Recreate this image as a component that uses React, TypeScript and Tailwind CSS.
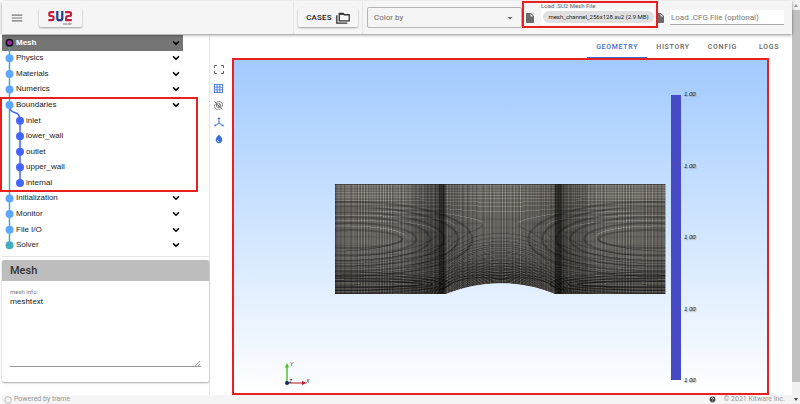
import type { ReactNode } from "react";
import { ChevronDown } from "lucide-react";
import {
  MdArrowDropDown,
  MdGridOn,
  MdHelp,
  MdInsertDriveFile,
  MdMenu,
  MdWaterDrop,
} from "react-icons/md";

type TreeNode = { label: string; depth: number; y: number };

const nodes: TreeNode[] = [
  "Mesh",
  "Physics",
  "Materials",
  "Numerics",
  "Boundaries",
  "-inlet",
  "-lower_wall",
  "-outlet",
  "-upper_wall",
  "-internal",
  "Initialization",
  "Monitor",
  "File I/O",
  "Solver",
].map((name, i) => ({
  label: name.replace("-", ""),
  depth: name.startsWith("-") ? 1 : 0,
  y: (i + 0.5) * (218 / 14),
}));

const tabs = ["Geometry", "History", "Config", "Logs"];

// Channel mesh, 256 x 128 cells. Grid lines are snapped to a raster finer
// than the screen, which gives the interference rings of a dense wireframe.
const RES = 2.23;
const MESH_W = 330;
const MESH_H = 110;
const snap = (v: number) => Math.round(v * RES) / RES;

function gridX(i: number) {
  const t = (i / 256) * 3;
  const cell = Math.floor(Math.min(t, 2.999));
  const f = t - cell;
  const k = 0.17;
  if (cell === 0) return (f + k * Math.sin(Math.PI * f) * f) * 110;
  if (cell === 1) return (1 + f - 0.03 * Math.sin(2 * Math.PI * f)) * 110;
  return (3 - (1 - f + k * Math.sin(Math.PI * f) * (1 - f))) * 110;
}

function gridY(x: number, j: number) {
  const eta = j / 128;
  const u = x / 110;
  const arc = u > 1 && u < 2 ? 44 * (u - 1) * (2 - u) : 0;
  const spread = 8 * Math.exp(-Math.pow((u - 1.5) / 0.75, 2));
  const lift = arc * Math.pow(1 - eta, 3) + spread * eta * Math.pow(1 - eta, 2) * 2;
  const stretched = eta * 0.7 + eta * eta * 0.3;
  return MESH_H * (1 - stretched) - lift;
}

function meshPaths() {
  let columns = "";
  for (let i = 0; i <= 256; i++) {
    const x = snap(gridX(i));
    columns += `M${x.toFixed(2)} 0V${gridY(x, 0).toFixed(2)}`;
  }
  let rows = "";
  for (let j = 0; j <= 128; j++) {
    let y = snap(gridY(0, j));
    rows += `M0 ${y.toFixed(2)}`;
    for (let x = 1; x <= MESH_W; x++) {
      const next = snap(gridY(x, j));
      if (next !== y) {
        rows += `H${x}M${x} ${next.toFixed(2)}`;
        y = next;
      }
    }
    rows += `H${MESH_W}`;
  }
  return { columns, rows };
}

const mesh = meshPaths();
const OUTLINE = "M0 0H330V110H220Q165 88 110 110H0Z";

// Broad dark fringes on one half of the channel; the other half mirrors them.
function Fringes() {
  return (
    <g fill="none" stroke="#000">
      {[3, 6, 9, 12].map((r, i) => (
        <ellipse key={r} cx="10" cy="100" rx={78 + i * 9} ry={r} strokeWidth="1.400" opacity={0.6 - i * 0.1} />
      ))}
      {[9, 16, 22, 27, 32, 37].map((r, i) => (
        <ellipse key={r} cx="15" cy="55" rx={52 + i * 14} ry={r} strokeWidth="2" opacity={0.22} />
      ))}
      {[3, 6, 9, 12, 15, 18, 21].map((d, i) => (
        <path key={d} d={`M${108 - d} 110Q${118 - d / 2} ${92 - d} 165 ${98 - d}`} opacity={0.5 - i * 0.06} />
      ))}
    </g>
  );
}

function MeshDrawing() {
  return (
    <svg viewBox="0 0 330 110" className="w-full" role="img" aria-label="Channel mesh">
      <clipPath id="channel">
        <path d={OUTLINE} />
      </clipPath>
      <path d={OUTLINE} fill="#fff8ec" />
      <g clipPath="url(#channel)">
        <path d={mesh.columns} stroke="#000" strokeWidth={1 / RES} fill="none" />
        <path d={mesh.rows} stroke="#000" strokeWidth={1 / RES} fill="none" />
        <Fringes />
        <g transform="translate(330 0) scale(-1 1)">
          <Fringes />
        </g>
        <path d="M0 0H330M0 0V110M330 0V110" stroke="#222" fill="none" />
        <path d="M107 0V110M223 0V110" stroke="#000" strokeWidth="7" opacity="0.35" />
        <path d="M92 0V110M238 0V110" stroke="#000" strokeWidth="30" opacity="0.12" />
      </g>
    </svg>
  );
}

function Logo() {
  return (
    <svg viewBox="0 0 25 16" className="h-4 w-[25px]" fill="none" strokeWidth="2.200">
      <path d="M6.200 2.100H3Q1.300 2.100 1.300 3.700V4.400Q1.300 6 3 6H3.800Q5.500 6 5.500 7.600V8.600Q5.500 10.200 3.800 10.200H.4" stroke="#c41f3e" />
      <path d="M9.300 1V8.200Q9.300 10.200 11.200 10.200H12.400Q14.300 10.200 14.300 8.200V1" stroke="#1f3f8f" />
      <path d="M17.200 2.100H21.200Q23 2.100 23 3.700V4.400Q23 6 21.200 6H20Q18.200 6 18.200 7.800V10.200H23.800" stroke="#c41f3e" />
      <text x="15" y="15" fontSize="4" fill="#666" stroke="none" fontFamily="Roboto">
        code
      </text>
    </svg>
  );
}

function FoldersIcon() {
  return (
    <svg viewBox="0 0 26 22" className="h-3 w-3.5" fill="none" stroke="#333" strokeWidth="2.400">
      <path d="M6 2.500H13L15.500 5H24.500V16.500H6Z" />
      <path d="M6 4H14" />
      <path d="M1.500 6V20.500H21" />
    </svg>
  );
}

function TreeGraph() {
  const first = nodes[0].y;
  const last = nodes[13].y;
  return (
    <svg viewBox="0 0 26 218" className="pointer-events-none absolute left-0 top-0 h-full w-[26px]">
      <path d={`M7.500 ${first}V${last}`} stroke="#43acc0" strokeWidth="1.500" />
      <path
        d={`M7.500 ${nodes[4].y}C7.500 82 18 73 18 ${nodes[5].y}V${nodes[9].y}`}
        stroke="#4364ff"
        strokeWidth="1.500"
        fill="none"
      />
      {nodes.map((n, i) => (
        <circle
          key={n.label}
          cx={n.depth ? 18 : 7.5}
          cy={n.y}
          r={i === 0 ? 3.2 : 4}
          fill={i === 0 ? "#9c27b0" : n.depth ? "#4364ff" : i === 13 ? "#43acc0" : "#5fa8ff"}
          stroke={i === 0 ? "#111" : "none"}
          strokeWidth="1.500"
        />
      ))}
    </svg>
  );
}

function Tree() {
  return (
    <nav className="relative h-[218px]">
      <ul className="grid h-full auto-rows-fr">
        {nodes.map((n, i) => (
          <li
            key={n.label}
            className={`mr-[26px] flex items-center pr-0.5 ${n.depth ? "pl-6" : "pl-3.5"} ${i === 0 ? "bg-[#757575] font-bold text-white" : ""}`}
          >
            <a href="#" className="flex-1 leading-none">
              {n.label}
            </a>
            {!n.depth && (
              <button aria-label={`Toggle ${n.label}`} className="text-black">
                <ChevronDown className="size-2.5" strokeWidth={4} />
              </button>
            )}
          </li>
        ))}
      </ul>
      <TreeGraph />
      <div className="pointer-events-none absolute -left-0.5 right-[11px] top-[62px] h-[95px] border-2 border-[#e8201f]" />
    </nav>
  );
}

function ToolButton({ label, children }: { label: string; children: ReactNode }) {
  return (
    <button aria-label={label} className="flex size-4 items-center justify-center">
      {children}
    </button>
  );
}

function ViewTools() {
  return (
    <div className="flex w-[22px] shrink-0 flex-col items-center gap-px pr-[5px] pt-[3px] text-[#3a6fd8]">
      <ToolButton label="Reset camera">
        <svg viewBox="0 0 20 18" className="h-[9px] w-2.5" fill="none" stroke="#666" strokeWidth="2">
          <path d="M1 6V1H6M14 1H19V6M19 12V17H14M6 17H1V12" />
        </svg>
      </ToolButton>
      <div className="h-px" />
      <ToolButton label="Toggle grid">
        <MdGridOn className="size-[11px]" />
      </ToolButton>
      <ToolButton label="Toggle rotation">
        <svg viewBox="0 0 20 20" className="size-[9px]" fill="none" stroke="#666" strokeWidth="1.800">
          <path d="M5 3.500A8 8 0 0 1 17 14.500M15 17A8 8 0 0 1 3 6" />
          <path d="M10 5L14.500 7.500V12.500L10 15L5.500 12.500V7.500ZM5.500 7.500L10 10L14.500 7.500M10 10V15M1 1L19 19" />
        </svg>
      </ToolButton>
      <ToolButton label="Toggle axes">
        <svg viewBox="0 0 20 20" className="size-2.5" fill="none" stroke="currentColor" strokeWidth="2">
          <path d="M10 3V12L3 17M10 12L17 17" />
          <path d="M10 0L13 4H7ZM0 19L2 14L5 18ZM20 19L18 14L15 18Z" fill="currentColor" stroke="none" />
        </svg>
      </ToolButton>
      <ToolButton label="Surface color">
        <MdWaterDrop className="size-2.5" />
      </ToolButton>
    </div>
  );
}

function Toolbar() {
  return (
    <header className="relative z-10 flex h-[33px] items-center bg-[#f5f5f5] pr-2 shadow-[0_1px_3px_rgba(0,0,0,0.45)]">
      <button aria-label="Menu" className="ml-2 text-[#777]">
        <MdMenu className="size-3.5" />
      </button>
      <button aria-label="Home" className="ml-[15px] flex h-[19px] w-[43px] items-center justify-center rounded-xs bg-[#f5f5f5] shadow-[0_1px_2px_rgba(0,0,0,0.35)]">
        <Logo />
      </button>
      <div className="flex-1" />
      <div className="flex h-full items-center border-x border-[#e4e4e4] px-1">
        <button className="flex h-[19px] w-[60px] items-center justify-center gap-1 rounded-xs bg-[#f5f5f5] text-[8px] font-medium tracking-wide text-[#222] shadow-[0_1px_2px_rgba(0,0,0,0.35)]">
          CASES <FoldersIcon />
        </button>
      </div>
      <div className="relative ml-1 flex h-[21px] w-[155px]">
        <select aria-label="Color by" className="flex-1 appearance-none rounded-xs border border-[#b5b5b5] pl-1.5 text-[8px] text-[#6b6b6b]">
          <option>Color by</option>
        </select>
        <MdArrowDropDown className="pointer-events-none absolute right-1.5 top-[5px] size-3 text-[#666]" />
      </div>
      <div className="relative flex h-full w-[132px] items-center gap-[5px] pl-0.5">
        <MdInsertDriveFile className="size-3 shrink-0 text-[#6b6b6b]" />
        <div className="flex h-full flex-1 flex-col">
          <label htmlFor="mesh-file" className="pt-px text-[6px] leading-[7px] text-[#666]">
            Load .SU2 Mesh File
          </label>
          <div className="flex h-4 items-center bg-white pl-0.5">
            <button
              id="mesh-file"
              className="h-3 flex-1 whitespace-nowrap rounded-full bg-[#e0e0e0] text-[6px] leading-3 text-[#222]"
            >
              mesh_channel_256x128.su2 (2.9 MB)
            </button>
          </div>
        </div>
        <div className="pointer-events-none absolute left-0 -right-1 top-0 h-[27px] border-2 border-[#e8201f]" />
      </div>
      <MdInsertDriveFile className="size-3 shrink-0 text-[#6b6b6b]" />
      <input
        aria-label="Load .CFG File (optional)"
        placeholder="Load .CFG File (optional)"
        className="ml-1 h-[15px] w-[114px] border-b border-[#aaa] bg-white pl-px text-[8px] placeholder:text-[#777]"
      />
    </header>
  );
}

function Viewer() {
  return (
    <section className="relative flex-1 border-2 border-[#e8201f] bg-linear-to-b from-[#a1caff] to-white">
      <div className="absolute left-[19%] right-[19%] top-[124px]">
        <MeshDrawing />
      </div>
      <div className="absolute bottom-3 right-[68px] top-[34px] flex gap-[3px]">
        <div className="my-px w-[10px] bg-[#464bc5]" />
        <ul className="-my-1 flex w-[15px] flex-col justify-between font-['Liberation_Sans',sans-serif] text-[6px] italic leading-[9px] text-[#222] text-shadow-[1px_1px_1px_#999]">
          {[0, 1, 2, 3, 4].map((k) => (
            <li key={k}>1.00</li>
          ))}
        </ul>
      </div>
      <svg viewBox="0 0 28 28" className="absolute bottom-1 left-12 size-7">
        <path d="M5 22V6" stroke="#4fc22c" strokeWidth="1.500" />
        <path d="M5 2L7.200 6.500H2.800Z" fill="#4fc22c" />
        <path d="M5 22H20" stroke="#b8434a" strokeWidth="1.200" />
        <path d="M25 22L20 20V24Z" fill="#c4202a" />
        <circle cx="5" cy="22" r="2" fill="#17295e" />
        <g fontSize="5" fontStyle="italic" fontFamily="Liberation Sans" fill="#222">
          <text x="8" y="5">Y</text>
          <text x="7" y="22">Z</text>
          <text x="24" y="22">X</text>
        </g>
      </svg>
    </section>
  );
}

function ScrollTrack() {
  return (
    <div aria-hidden="true" className="flex w-2 flex-col items-center bg-[#f1f1f1]">
      <svg viewBox="0 0 8 10" className="h-2.5 w-2">
        <path d="M4 4L6 7H2Z" fill="#999" />
      </svg>
      <div className="w-full flex-1 bg-[#c1c1c1]" />
      <svg viewBox="0 0 8 22" className="h-[22px] w-2">
        <path d="M4 19L6 16H2Z" fill="#444" />
      </svg>
    </div>
  );
}

export default function App() {
  return (
    <div className="flex min-h-screen bg-white font-[Roboto,sans-serif] text-[#222]">
      <div className="flex flex-1 flex-col pl-0.5 pt-px">
        <Toolbar />
        <main className="flex flex-1">
          <aside className="flex w-[208px] flex-col border-r border-[#e6e6e6]">
            <div className="border-b border-[#e6e6e6] pb-[3px] pt-px font-['Liberation_Sans',sans-serif] text-[8px]">
              <Tree />
            </div>
            <div className="mt-[3px] flex h-[122px] flex-col rounded-xs shadow-[0_1px_2px_rgba(0,0,0,0.35)]">
              <h2 className="h-[21px] rounded-t-xs bg-[#bdbdbd] pl-2 text-[11px] font-medium leading-[21px] text-[#333]">Mesh</h2>
              <div className="relative flex flex-1 flex-col px-2 pb-[15px] pt-[7px]">
                <label htmlFor="mesh-info" className="text-[6px] leading-[8px] text-[#777]">
                  mesh info:
                </label>
                <textarea
                  id="mesh-info"
                  defaultValue="meshtext"
                  className="w-full flex-1 resize-none border-b border-[#999] text-[8px] leading-[11px]"
                />
                <svg viewBox="0 0 5 5" className="pointer-events-none absolute bottom-4 right-[9px] size-[5px]">
                  <path d="M0 5L5 0M3 5L5 3" stroke="#777" strokeWidth="0.800" />
                </svg>
              </div>
            </div>
          </aside>
          <div className="flex flex-1 flex-col">
            <div role="tablist" className="flex h-6 justify-end">
              {tabs.map((t, i) => (
                <button
                  key={t}
                  role="tab"
                  aria-selected={i === 0}
                  className={`min-w-[46px] border-b px-[9px] pt-1 text-[7px] font-medium uppercase tracking-widest ${i === 0 ? "border-[#3a6fd8] text-[#3a6fd8]" : "border-transparent text-[#666]"}`}
                >
                  {t}
                </button>
              ))}
            </div>
            <div className="flex flex-1 pr-[23px]">
              <ViewTools />
              <Viewer />
            </div>
          </div>
        </main>
        <footer className="flex h-[9px] items-center bg-[#f5f5f5] pl-0.5 pr-[7px] text-[7px] leading-[9px] text-[#999]">
          <svg viewBox="0 0 8 8" className="size-2">
            <circle cx="4" cy="4" r="3.300" fill="none" stroke="#bbb" />
          </svg>
          <a href="#" className="ml-0.5 flex-1">
            Powered by trame
          </a>
          <button aria-label="Help" className="mr-2">
            <MdHelp className="size-[7px] text-[#444]" />
          </button>
          <a href="#">© 2021 Kitware Inc.</a>
        </footer>
      </div>
      <ScrollTrack />
    </div>
  );
}
